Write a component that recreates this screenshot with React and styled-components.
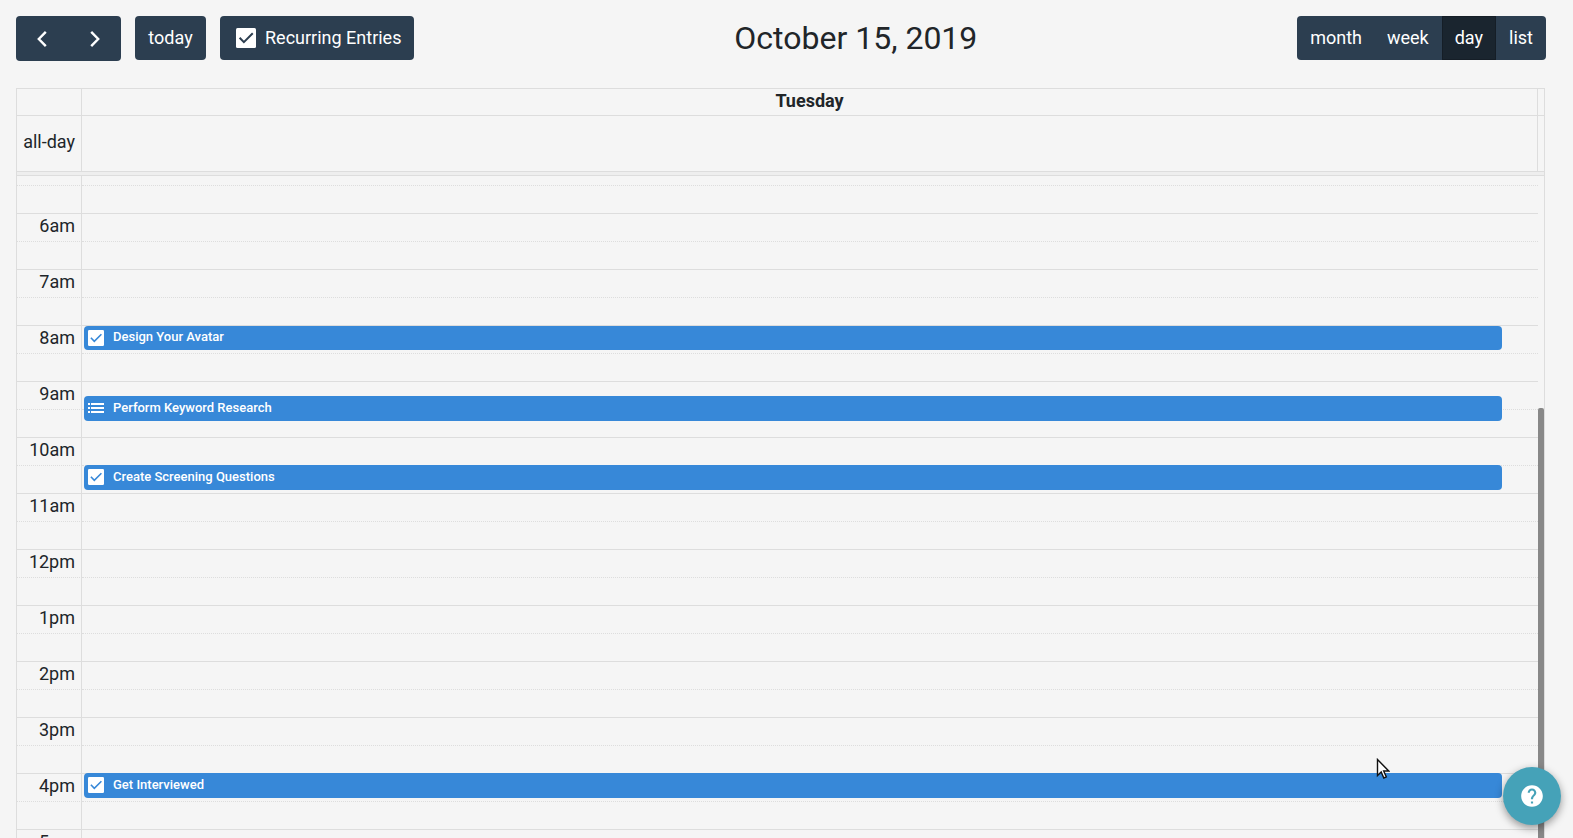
import React, { useLayoutEffect, useRef, useState } from 'react';
import styled, { createGlobalStyle, css } from 'styled-components';
import { MdHelp } from 'react-icons/md';

const SLOT_HEIGHT = 28;
const HOUR_HEIGHT = SLOT_HEIGHT * 2;
const LABEL_HEIGHT = 19;
const SCROLLER_HEIGHT = 1045;
const DAY_HEIGHT = HOUR_HEIGHT * 24;

const views = ['month', 'week', 'day', 'list'];

const entries = [
    { "title": "Design Your Avatar", "start": 481, "end": 507, "type": "task" },
    { "title": "Perform Keyword Research", "start": 556, "end": 583, "type": "list" },
    { "title": "Create Screening Questions", "start": 630, "end": 657, "type": "task" },
    { "title": "Get Interviewed", "start": 960, "end": 987, "type": "task" }
];

const hours = Array.from({ length: 24 }, (_, i) => i);

const formatHour = (hour) => `${hour % 12 || 12}${hour < 12 ? 'am' : 'pm'}`;
const toPixels = (minutes) => Math.round(minutes * HOUR_HEIGHT / 60);

const CheckIcon = ({ size, tick }) => (
    <svg width={size} height={size} viewBox="0 0 16 16" aria-hidden="true">
        <rect width="16" height="16" rx="1.2" fill="#fff" />
        <path d="M2.9 7.8 6.3 11.3 13.4 4.2" fill="none" stroke={tick} strokeWidth="1.6" />
    </svg>
);

const ListIcon = () => (
    <svg width="16" height="16" viewBox="0 0 16 16" fill="#fff" aria-hidden="true">
        <path d="M0 3h2v2H0zM0 7h2v2H0zM0 11h2v2H0zM3 3h13v2H3zM3 7h13v2H3zM3 11h13v2H3z" />
    </svg>
);

const Toolbar = ({ view, onChangeView }) => {
    const [recurring, setRecurring] = useState(true);

    return (
        <StyledToolbar>
            <ToolbarSection>
                <ButtonGroup>
                    <ArrowButton type="button" aria-label="Previous day">
                        <Chevron viewBox="0 0 10 18"><path d="M8.8 1.8 1.8 9l7 7.2" /></Chevron>
                    </ArrowButton>
                    <ArrowButton type="button" aria-label="Next day">
                        <Chevron viewBox="0 0 10 18"><path d="M1.2 1.8 8.2 9l-7 7.2" /></Chevron>
                    </ArrowButton>
                </ButtonGroup>
                <TodayButton type="button">today</TodayButton>
                <RecurringToggle>
                    <input type="checkbox" checked={recurring} onChange={e => setRecurring(e.target.checked)} />
                    <CheckIcon size={20} tick={recurring ? colors.button : '#fff'} />
                    Recurring Entries
                </RecurringToggle>
            </ToolbarSection>

            <Title>October 15, 2019</Title>

            <ButtonGroup>
                {views.map(name => (
                    <ViewButton key={name} type="button" $active={name === view} onClick={() => onChangeView(name)}>
                        {name}
                    </ViewButton>
                ))}
            </ButtonGroup>
        </StyledToolbar>
    );
};

const Entry = ({ entry }) => {
    const top = toPixels(entry.start);
    const height = toPixels(entry.end) - top;

    return (
        <StyledEntry href="#" style={{ top, height }}>
            {entry.type === 'list' ? <ListIcon /> : <CheckIcon size={16} tick={colors.entry} />}
            <span>{entry.title}</span>
        </StyledEntry>
    );
};

const TimeGrid = () => {
    const scrollerRef = useRef(null);
    const [scrollTop, setScrollTop] = useState(0);
    const [visibleHeight, setVisibleHeight] = useState(SCROLLER_HEIGHT);

    useLayoutEffect(() => {
        const scroller = scrollerRef.current;
        const measure = () => setVisibleHeight(window.innerHeight - scroller.getBoundingClientRect().top);

        scroller.scrollTop = DAY_HEIGHT;
        setScrollTop(scroller.scrollTop);
        measure();
        window.addEventListener('resize', measure);
        return () => window.removeEventListener('resize', measure);
    }, []);

    const ratio = SCROLLER_HEIGHT / DAY_HEIGHT;

    // only the hours on screen get a label
    const isVisible = (hour) => {
        const top = hour * HOUR_HEIGHT;
        return top + LABEL_HEIGHT > scrollTop && top < scrollTop + visibleHeight;
    };

    return (
        <StyledTimeGrid>
            <Scroller ref={scrollerRef} onScroll={e => setScrollTop(e.target.scrollTop)}>
                <DayCanvas>
                    <SlotTable>
                        <tbody>
                            {hours.map(hour => (
                                <React.Fragment key={hour}>
                                    <SlotRow>
                                        <th scope="row">{isVisible(hour) && formatHour(hour)}</th>
                                        <td />
                                    </SlotRow>
                                    <SlotRow $minor>
                                        <th />
                                        <td />
                                    </SlotRow>
                                </React.Fragment>
                            ))}
                        </tbody>
                    </SlotTable>
                    <EntryLayer>
                        {entries.map(entry => <Entry key={entry.title} entry={entry} />)}
                    </EntryLayer>
                </DayCanvas>
            </Scroller>
            <ScrollTrack>
                <ScrollThumb style={{ marginTop: Math.round(scrollTop * ratio), height: Math.round(SCROLLER_HEIGHT * ratio) }} />
            </ScrollTrack>
        </StyledTimeGrid>
    );
};

const App = () => {
    const [view, setView] = useState('day');

    return (
        <Page>
            <GlobalStyle />
            <Toolbar view={view} onChangeView={setView} />

            <Calendar>
                <HeaderRow>
                    <AxisCell />
                    <DayName>Tuesday</DayName>
                    <Gutter />
                </HeaderRow>
                <AllDayRow>
                    <AxisCell>all-day</AxisCell>
                    <div />
                    <Gutter />
                </AllDayRow>
                <Divider />
                <TimeGrid />
            </Calendar>

            <HelpButton type="button" aria-label="Help">
                <MdHelp size={26} />
            </HelpButton>
            <Pointer viewBox="0 0 14 22">
                <path d="M1.5 1.5v16l3.7-3.5 2.6 6 2.5-1.1-2.6-5.9h5z" />
            </Pointer>
        </Page>
    );
};

const colors = {
    page: '#f5f5f5',
    line: '#dddddd',
    text: '#212529',
    button: '#2c3e50',
    buttonActive: '#1a252f',
    entry: '#3788d8',
    help: '#45a2b8',
};

const GlobalStyle = createGlobalStyle`
    *{
        box-sizing: border-box;
    }

    body{
        margin: 0;
        background: ${colors.page};
        color: ${colors.text};
        font-family: Roboto, "Liberation Sans", sans-serif;
        font-size: 18px;
        line-height: 26px;
    }
`;

const Page = styled.div`
    height: 100vh;
    overflow: hidden;
    padding: 16px 27px 0 16px;
`;

const StyledToolbar = styled.header`
    display: flex;
    justify-content: space-between;
    align-items: flex-start;
    margin-bottom: 27px;
`;

const ToolbarSection = styled.div`
    display: flex;
    align-items: flex-start;
    gap: 14px;
`;

const ButtonGroup = styled.div`
    display: flex;
    border-radius: 4px;
    overflow: hidden;
`;

const buttonStyle = css`
    display: flex;
    align-items: center;
    height: 44px;
    padding: 0 13px;
    border: 0;
    border-radius: 4px;
    background: ${colors.button};
    color: #fff;
    font: inherit;
    cursor: pointer;
`;

const TodayButton = styled.button`
    ${buttonStyle}
    justify-content: center;
    min-width: 71px;
`;

const ArrowButton = styled.button`
    ${buttonStyle}
    justify-content: center;
    width: 52px;
    height: 45px;
    border-radius: 0;

    &:last-child{
        width: 53px;
    }
`;

const ViewButton = styled.button`
    ${buttonStyle}
    border-radius: 0;

    &:first-child{
        padding-right: 12px;
    }

    ${({ $active }) => $active && css`
        background: ${colors.buttonActive};
        box-shadow: inset 0 0 0 1px #151e27;
    `}
`;

const Chevron = styled.svg`
    width: 10px;
    height: 18px;
    fill: none;
    stroke: #fff;
    stroke-width: 2.4;
`;

const RecurringToggle = styled.label`
    ${buttonStyle}
    gap: 9px;
    padding-left: 16px;

    input{
        appearance: none;
        width: 0;
        height: 0;
        margin: 0 -9px 0 0;
    }
`;

const Title = styled.h2`
    margin: 0;
    font-size: 32px;
    font-weight: 400;
    line-height: 45px;
`;

const Calendar = styled.main`
    margin-right: 1px;
    border: 1px solid ${colors.line};
`;

const HeaderRow = styled.div`
    display: grid;
    grid-template-columns: 65px 1fr 7px;
    height: 27px;
    border-bottom: 1px solid ${colors.line};
`;

const AllDayRow = styled(HeaderRow)`
    height: 56px;
`;

const AxisCell = styled.div`
    display: flex;
    align-items: center;
    justify-content: flex-end;
    padding: 0 6px 4px 0;
    border-right: 1px solid ${colors.line};
`;

const DayName = styled.div`
    text-align: center;
    font-weight: 700;
    line-height: 24px;
`;

const Gutter = styled.div`
    border-left: 1px solid ${colors.line};
`;

const Divider = styled.div`
    height: 4px;
    border-bottom: 1px solid ${colors.line};
    background: #eeeeee;
`;

const StyledTimeGrid = styled.div`
    display: grid;
    grid-template-columns: 1fr 6px;
    height: ${SCROLLER_HEIGHT}px;
`;

const Scroller = styled.div`
    overflow-y: scroll;
    scrollbar-width: none;
`;

const DayCanvas = styled.div`
    position: relative;
    height: ${DAY_HEIGHT}px;
    overflow: hidden;
`;

const SlotTable = styled.table`
    width: 100%;
    table-layout: fixed;
    border-spacing: 0;
`;

const SlotRow = styled.tr`
    height: ${SLOT_HEIGHT}px;

    th, td{
        padding: 0;
        border-top: 1px ${({ $minor }) => $minor ? 'dotted' : 'solid'} ${colors.line};
    }

    th{
        width: 65px;
        padding-right: 6px;
        border-right: 1px solid ${colors.line};
        font-weight: 400;
        line-height: 24px;
        text-align: right;
        vertical-align: top;
    }
`;

const EntryLayer = styled.div`
    position: absolute;
    inset: 0 0 0 65px;
    margin: 0 36px 0 2px;
`;

const StyledEntry = styled.a`
    position: absolute;
    left: 0;
    right: 0;
    display: flex;
    align-items: flex-end;
    gap: 9px;
    padding: 0 4px;
    border-radius: 4px;
    background: ${colors.entry};
    color: #fff;
    font-size: 13px;
    font-weight: 500;
    line-height: 22px;
    text-decoration: none;

    svg{
        align-self: flex-start;
        margin-top: 4px;
    }

    span{
        margin-bottom: 2px;
    }
`;

const ScrollTrack = styled.div`
    overflow: hidden;
`;

const ScrollThumb = styled.div`
    border-radius: 2px;
    background: #888;
`;

const HelpButton = styled.button`
    position: fixed;
    right: 12px;
    bottom: 13px;
    display: flex;
    align-items: center;
    justify-content: center;
    width: 58px;
    height: 58px;
    padding: 0;
    border: 0;
    border-radius: 50%;
    background: ${colors.help};
    box-shadow: 0 3px 8px rgba(0, 0, 0, 0.4);
    color: #fff;
    cursor: pointer;
`;

const Pointer = styled.svg`
    position: fixed;
    right: 183px;
    bottom: 58px;
    width: 14px;
    height: 22px;
    fill: #fff;
    stroke: #111;
    stroke-width: 1.4;
    pointer-events: none;
`;

export default App;
